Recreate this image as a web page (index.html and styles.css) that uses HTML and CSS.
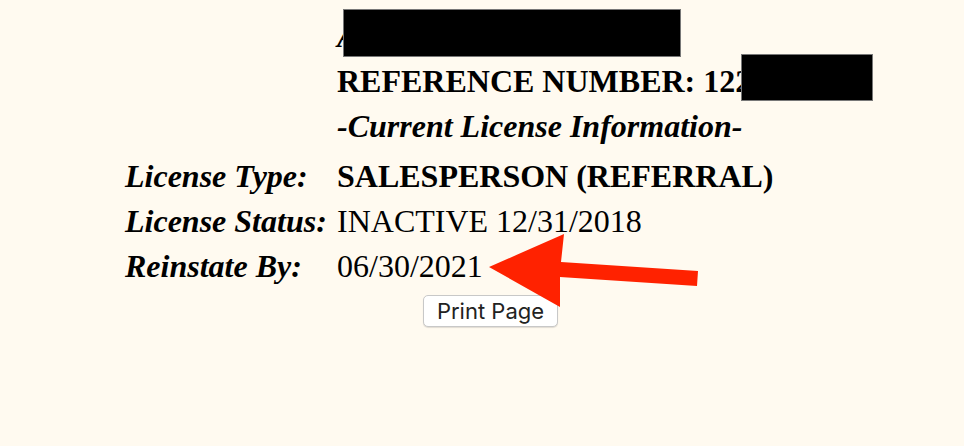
FILE: index.html
```html
<!DOCTYPE html>
<html>
<head>
<meta charset="utf-8">
<link rel="stylesheet" href="styles.css">
</head>
<body>
<div class="page">
  <div class="info">
    <div class="label"></div>
    <div class="value bi">ANONYMOUS PERSON</div>
    <div class="label"></div>
    <div class="value b">REFERENCE NUMBER: 1220000000</div>
    <div class="label"></div>
    <div class="value bi">-Current License Information-</div>
    <div class="label bi gap">License Type:</div>
    <div class="value b gap">SALESPERSON (REFERRAL)</div>
    <div class="label bi">License Status:</div>
    <div class="value">INACTIVE 12/31/2018</div>
    <div class="label bi">Reinstate By:</div>
    <div class="value tight">06/30/2021</div>
  </div>
  <div class="actions">
    <button class="print" type="button">Print Page</button>
  </div>
  <div class="redact redact-name"></div>
  <div class="redact redact-ref"></div>
  <svg class="arrow" width="964" height="446" viewBox="0 0 964 446">
    <polygon fill="#ff2200" points="489,267 564,234 561,262 698,271 697,286 560,277 560,307"/>
  </svg>
</div>
</body>
</html>
```
FILE: styles.css
```css
html, body {
  margin: 0;
  padding: 0;
  background: #fffaf0;
}
.page {
  position: relative;
  width: 964px;
  height: 446px;
  overflow: hidden;
  font-family: "Liberation Serif", "Times New Roman", serif;
  color: #000;
}
.info {
  display: grid;
  grid-template-columns: 212px auto;
  padding: 14px 0 0 125px;
  font-size: 32px;
  line-height: 45px;
  white-space: nowrap;
}
.gap { padding-top: 5px; }
.b { font-weight: bold; }
.bi { font-weight: bold; font-style: italic; }
.actions {
  padding: 6px 0 0 423px;
}
.print {
  font-family: Inter, "Liberation Sans", sans-serif;
  font-size: 22px;
  color: #222;
  background: #fff;
  border: 1px solid #c8c8c8;
  border-radius: 5px;
  box-shadow: 0 1px 1px rgba(0,0,0,0.12);
  width: 135px;
  height: 32px;
  padding: 0;
  line-height: 30px;
}
.redact {
  position: absolute;
  background: #000;
  border: 1px solid #777;
  box-sizing: border-box;
}
.redact-name { left: 343px; top: 9px; width: 338px; height: 48px; }
.redact-ref { left: 741px; top: 54px; width: 132px; height: 47px; }
.arrow {
  position: absolute;
  left: 0;
  top: 0;
}
```
